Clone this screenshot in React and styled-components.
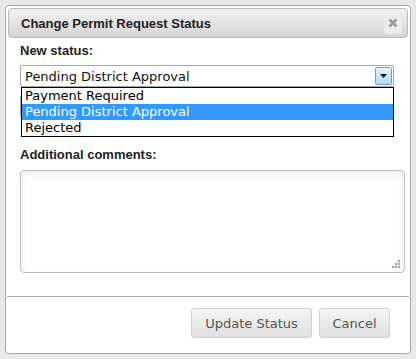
import React from "react";
import styled, { createGlobalStyle } from "styled-components";

const Global = createGlobalStyle`
  html, body { margin: 0; padding: 0; background: #e9e9e9; }
  body { font-family: "Liberation Sans", Arial, sans-serif; }
`;

const Dialog = styled.div`
  box-sizing: border-box;
  margin: 5px 0 0 5px;
  width: 406px;
  height: 349px;
  background: #fff;
  border: 1px solid #a9a9a9;
  border-radius: 4px;
  padding: 2px;
  display: flex;
  flex-direction: column;
`;

const Header = styled.div`
  box-sizing: border-box;
  height: 30px;
  border: 1px solid #b9b9b9;
  border-radius: 4px;
  background: linear-gradient(#f2f2f2, #d5d5d5);
  display: flex;
  align-items: center;
  justify-content: space-between;
  padding: 0 5px 0 12px;
`;

const Title = styled.span`
  font: bold 13px "Liberation Sans", Arial, sans-serif;
  color: #222;
`;

const CloseBtn = styled.div`
  width: 18px;
  height: 21px;
  border-radius: 3px;
  background: #ececec;
  display: flex;
  align-items: center;
  justify-content: center;
`;

const Content = styled.div`
  padding: 5px 0 0 12px;
  display: flex;
  flex-direction: column;
  flex: 1;
`;

const Label = styled.div`
  font: bold 13px/16px "Liberation Sans", Arial, sans-serif;
  color: #222;
  margin-bottom: ${(p) => p.$mb}px;
`;

const SelectWrap = styled.div`
  position: relative;
  width: 374px;
  margin-bottom: 60px;
`;

const SelectBox = styled.div`
  box-sizing: border-box;
  height: 22px;
  border: 1px solid #a7a7a7;
  border-radius: 2px;
  background: #fff;
  display: flex;
  align-items: center;
  justify-content: space-between;
  padding: 0 1px 0 4px;
  font: 13px "DejaVu Sans", Verdana, sans-serif;
  color: #111;
`;

const Arrow = styled.div`
  box-sizing: border-box;
  width: 17px;
  height: 18px;
  border: 1px solid #6c9fd0;
  border-radius: 2px;
  background: linear-gradient(#e4f3fd, #b4dcf7);
  display: flex;
  align-items: center;
  justify-content: center;
`;

const List = styled.div`
  position: absolute;
  top: 22px;
  left: 1px;
  right: 0;
  box-sizing: border-box;
  border: 1px solid #000;
  background: #fff;
  z-index: 2;
`;

const Option = styled.div`
  height: 16px;
  padding-left: 3px;
  font: 13px/16px "DejaVu Sans", Verdana, sans-serif;
  color: ${(p) => (p.$active ? "#fff" : "#000")};
  background: ${(p) => (p.$active ? "#3399ff" : "#fff")};
`;

const Hidden = styled.div`
  position: absolute;
  top: 30px;
  left: 0;
  right: 0;
  height: 23px;
  box-sizing: border-box;
  border: 1px solid #a7a7a7;
  border-radius: 2px;
`;

const TextArea = styled.div`
  box-sizing: border-box;
  width: 385px;
  height: 103px;
  border: 1px solid #bdbdbd;
  border-radius: 4px;
  background: #fff;
  box-shadow: inset 0 3px 8px rgba(0, 0, 0, 0.08);
  position: relative;
`;

const Grip = styled.svg`
  position: absolute;
  right: 3px;
  bottom: 3px;
`;

const Footer = styled.div`
  box-sizing: border-box;
  border-top: 1px solid #a9a9a9;
  margin: 0 -1px;
  height: 55px;
  display: flex;
  justify-content: flex-end;
  align-items: flex-start;
  gap: 7px;
  padding: 11px 19px 0 0;
`;

const Button = styled.div`
  box-sizing: border-box;
  height: 30px;
  width: ${(p) => p.$w}px;
  border: 1px solid #cfcfcf;
  border-radius: 3px;
  background: linear-gradient(#f4f4f4, #e1e1e1);
  font: 13px "DejaVu Sans", Verdana, sans-serif;
  color: #555;
  display: flex;
  align-items: center;
  justify-content: center;
`;

export default function App() {
  return (
    <>
      <Global />
      <Dialog>
        <Header>
          <Title>Change Permit Request Status</Title>
          <CloseBtn>
            <svg width="10" height="10" viewBox="0 0 10 10">
              <path d="M1.5 1.5 L8.5 8.5 M8.5 1.5 L1.5 8.5" stroke="#999" strokeWidth="2.6" />
            </svg>
          </CloseBtn>
        </Header>
        <Content>
          <Label $mb={6}>New status:</Label>
          <SelectWrap>
            <SelectBox>
              <span>Pending District Approval</span>
              <Arrow>
                <svg width="7" height="4" viewBox="0 0 7 4">
                  <path d="M0 0 L7 0 L3.5 4 Z" fill="#111" />
                </svg>
              </Arrow>
            </SelectBox>
            <Hidden />
            <List>
              <Option>Payment Required</Option>
              <Option $active>Pending District Approval</Option>
              <Option>Rejected</Option>
            </List>
          </SelectWrap>
          <Label $mb={7}>Additional comments:</Label>
          <TextArea>
            <Grip width="10" height="10" viewBox="0 0 10 10">
              <g fill="#a0a0a0">
                <rect x="7" y="1" width="2" height="2" />
                <rect x="4" y="4" width="2" height="2" />
                <rect x="7" y="4" width="2" height="2" />
                <rect x="1" y="7" width="2" height="2" />
                <rect x="4" y="7" width="2" height="2" />
                <rect x="7" y="7" width="2" height="2" />
              </g>
            </Grip>
          </TextArea>
        </Content>
        <Footer>
          <Button $w={121}>Update Status</Button>
          <Button $w={71}>Cancel</Button>
        </Footer>
      </Dialog>
    </>
  );
}
